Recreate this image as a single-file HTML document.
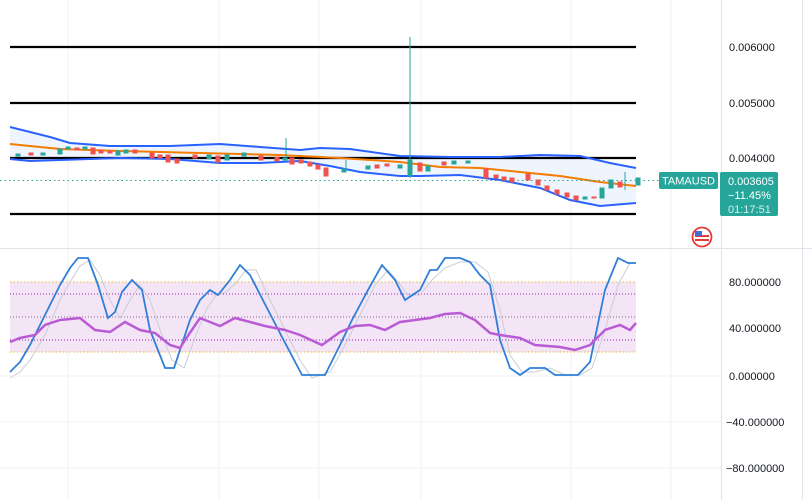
<!DOCTYPE html>
<html><head><meta charset="utf-8"><style>
body{margin:0;background:#fff;width:812px;height:500px;overflow:hidden;font-family:"Liberation Sans",sans-serif}
svg{position:absolute;left:0;top:0}
</style></head><body>
<svg width="812" height="500" viewBox="0 0 812 500">
<g stroke="#f0f1f4" stroke-width="1">
<line x1="68" y1="0" x2="68" y2="500"/><line x1="219" y1="0" x2="219" y2="500"/><line x1="319" y1="0" x2="319" y2="500"/><line x1="421" y1="0" x2="421" y2="500"/><line x1="571" y1="0" x2="571" y2="500"/><line x1="671" y1="0" x2="671" y2="500"/>
<line x1="0" y1="376" x2="721" y2="376"/><line x1="0" y1="422" x2="721" y2="422"/><line x1="0" y1="468" x2="721" y2="468"/>
</g>
<line x1="0" y1="248.5" x2="812" y2="248.5" stroke="#e0e3eb"/>
<line x1="721.5" y1="0" x2="721.5" y2="500" stroke="#e0e3eb"/>
<line x1="802.5" y1="0" x2="802.5" y2="500" stroke="#e0e3eb"/>
<!-- band fill -->
<path d="M10,127 L50,137 L70,143 L110,146 L170,146 L220,144 L260,147 L300,150 L320,148 L350,149 L400,156 L450,157 L500,157 L540,155 L580,156 L610,163 L636,168 L636,203 L600,206 L570,200 L540,188 L500,180 L460,175 L420,176 L400,176 L360,172 L330,166 L300,161 L260,163 L220,163 L170,159 L120,158 L60,160 L30,161 L10,159 Z" fill="#eef5fe"/>
<g stroke="#000" stroke-width="2.2">
<line x1="10" y1="47" x2="636" y2="47"/><line x1="10" y1="103" x2="636" y2="103"/><line x1="10" y1="158" x2="636" y2="158"/><line x1="10" y1="214" x2="636" y2="214"/>
</g>
<g fill="none" stroke="#2962ff" stroke-width="2">
<polyline points="10,127 50,137 70,143 110,146 170,146 220,144 260,147 300,150 320,148 350,149 400,156 450,157 500,157 540,155 580,156 610,163 636,168"/>
<polyline points="10,159 30,161 60,160 120,158 170,159 220,163 260,163 300,161 330,166 360,172 400,176 420,176 460,175 500,180 540,188 570,200 600,206 636,203"/>
</g>
<polyline fill="none" stroke="#f57c00" stroke-width="2" points="10,144 60,149 120,151 200,153 280,155 340,158 400,162 440,167 480,168 520,172 560,176 600,182 636,186"/>
<line x1="0" y1="180.5" x2="720" y2="180.5" stroke="#26a69a" stroke-dasharray="1.5,3"/>
<!-- candles -->
<g stroke-width="1">
<g fill="#26a69a" stroke="#26a69a">
<rect x="16" y="154" width="4" height="2"/><rect x="41" y="153" width="4" height="2"/><rect x="58" y="149" width="4" height="5"/><rect x="66" y="147" width="4" height="2"/><rect x="83" y="147" width="4" height="2"/><rect x="116" y="151" width="4" height="4"/><rect x="124" y="150" width="4" height="3"/><rect x="207" y="155" width="4" height="4"/><rect x="225" y="155" width="4" height="5"/><rect x="242" y="153" width="4" height="3"/><rect x="283" y="158" width="4" height="2"/><rect x="342" y="169" width="4" height="3"/><rect x="366" y="166" width="4" height="3"/><rect x="398" y="165" width="4" height="3"/><rect x="408" y="160" width="4" height="16"/><rect x="426" y="166" width="4" height="5"/><rect x="452" y="161" width="4" height="3"/><rect x="466" y="161" width="4" height="2"/><rect x="583" y="197" width="4" height="2"/><rect x="600" y="188" width="4" height="10"/><rect x="609" y="180" width="4" height="8"/><rect x="636" y="178" width="4" height="7"/>
<line x1="410" y1="37" x2="410" y2="178"/><line x1="286" y1="138" x2="286" y2="160"/><line x1="346" y1="160" x2="346" y2="172"/><line x1="625" y1="172" x2="625" y2="190"/>
</g>
<g fill="#ef5350" stroke="#ef5350">
<rect x="29" y="153" width="4" height="2"/><rect x="75" y="148" width="4" height="2"/><rect x="91" y="148" width="4" height="6"/><rect x="99" y="150" width="4" height="3"/><rect x="108" y="151" width="4" height="2"/><rect x="133" y="150" width="4" height="3"/><rect x="150" y="153" width="4" height="5"/><rect x="158" y="155" width="4" height="3"/><rect x="166" y="155" width="4" height="7"/><rect x="175" y="159" width="4" height="4"/><rect x="193" y="155" width="4" height="3"/><rect x="216" y="156" width="4" height="6"/><rect x="259" y="156" width="4" height="4"/><rect x="275" y="157" width="4" height="4"/><rect x="290" y="158" width="4" height="6"/><rect x="299" y="160" width="4" height="3"/><rect x="308" y="162" width="4" height="4"/><rect x="316" y="165" width="4" height="4"/><rect x="324" y="168" width="4" height="8"/><rect x="375" y="165" width="4" height="3"/><rect x="385" y="164" width="4" height="2"/><rect x="418" y="163" width="4" height="8"/><rect x="442" y="162" width="4" height="3"/><rect x="484" y="169" width="4" height="9"/><rect x="494" y="175" width="4" height="3"/><rect x="502" y="177" width="4" height="3"/><rect x="510" y="178" width="4" height="4"/><rect x="526" y="174" width="4" height="6"/><rect x="536" y="180" width="4" height="5"/><rect x="545" y="186" width="4" height="4"/><rect x="555" y="190" width="4" height="4"/><rect x="565" y="193" width="4" height="4"/><rect x="574" y="196" width="4" height="4"/><rect x="592" y="197" width="4" height="1"/><rect x="618" y="182" width="4" height="5"/>
</g>
</g>
<!-- lower panel -->
<rect x="10" y="282" width="626" height="70" fill="#f3e5f5"/>
<g fill="none">
<line x1="10" y1="282" x2="636" y2="282" stroke="#e8b83a" stroke-dasharray="1.5,2"/>
<line x1="10" y1="352" x2="636" y2="352" stroke="#e8b83a" stroke-dasharray="1.5,2"/>
<line x1="10" y1="294" x2="636" y2="294" stroke="#9c27b0" stroke-dasharray="1,2"/>
<line x1="10" y1="317" x2="636" y2="317" stroke="#8a6a8a" stroke-dasharray="1,2"/>
<line x1="10" y1="340" x2="636" y2="340" stroke="#9c27b0" stroke-dasharray="1,2"/>
<polyline stroke="#c9cdd6" stroke-width="1" points="10,378 20,372 30,360 45,335 60,300 70,282 80,266 90,260 100,275 110,300 120,318 130,300 140,285 150,300 160,330 172,360 184,368 196,335 206,310 216,295 226,292 236,283 246,270 256,270 270,300 285,330 300,360 312,378 330,372 345,345 360,315 375,285 388,270 398,282 408,295 420,295 432,280 445,268 460,262 475,262 488,272 500,310 510,355 522,372 535,372 550,368 565,375 580,375 592,368 605,330 618,285 630,263"/>
<polyline stroke="#2f7ed8" stroke-width="1.8" points="10,372 20,362 30,345 45,315 60,285 70,268 78,258 88,258 98,285 108,318 115,312 122,292 132,280 142,290 150,330 165,368 174,368 190,320 200,300 210,290 218,295 230,280 240,265 250,275 268,310 282,337 302,375 325,375 340,345 352,320 368,290 382,265 395,280 405,300 420,290 430,270 437,270 445,258 460,258 470,262 480,275 490,285 500,340 510,368 520,375 530,368 545,368 555,375 578,375 590,362 605,290 618,258 628,263 636,263"/>
<polyline stroke="#ba5bd6" stroke-width="2.5" points="10,342 20,338 35,335 45,325 60,320 80,318 95,330 110,332 125,322 140,330 155,333 170,345 180,348 185,340 200,318 220,326 235,318 250,322 265,326 285,330 300,335 322,345 340,332 355,326 370,325 385,330 400,322 415,320 430,318 445,314 460,313 475,320 490,333 500,335 520,338 535,345 560,347 575,350 590,345 605,330 620,325 630,330 636,323"/>
</g>
<g font-size="11" fill="#131722" font-family="Liberation Sans">
<text x="729" y="51">0.006000</text><text x="729" y="107">0.005000</text><text x="729" y="162">0.004000</text>
<text x="729" y="286">80.000000</text><text x="729" y="332">40.000000</text><text x="729" y="380">0.000000</text><text x="726" y="426">−40.000000</text><text x="726" y="472">−80.000000</text>
</g>
<rect x="659" y="172" width="59" height="17" rx="2" fill="#26a69a"/>
<text x="688.5" y="184.5" font-size="11" fill="#fff" text-anchor="middle">TAMAUSD</text>
<rect x="720" y="172" width="58" height="44" rx="2" fill="#26a69a"/>
<g font-size="11" fill="#fff"><text x="728" y="185">0.003605</text><text x="728" y="199">−11.45%</text><text x="728" y="213" fill="#d8f0ed">01:17:51</text></g>
<circle cx="702" cy="237" r="9.5" fill="#fff" stroke="#e53935" stroke-width="1.8"/>
<rect x="695" y="239" width="14" height="2" fill="#e53935"/><rect x="695" y="235" width="14" height="2" fill="#e53935"/>
<rect x="695" y="231" width="7" height="5" fill="#3f6fd8"/>
</svg>
</body></html>
